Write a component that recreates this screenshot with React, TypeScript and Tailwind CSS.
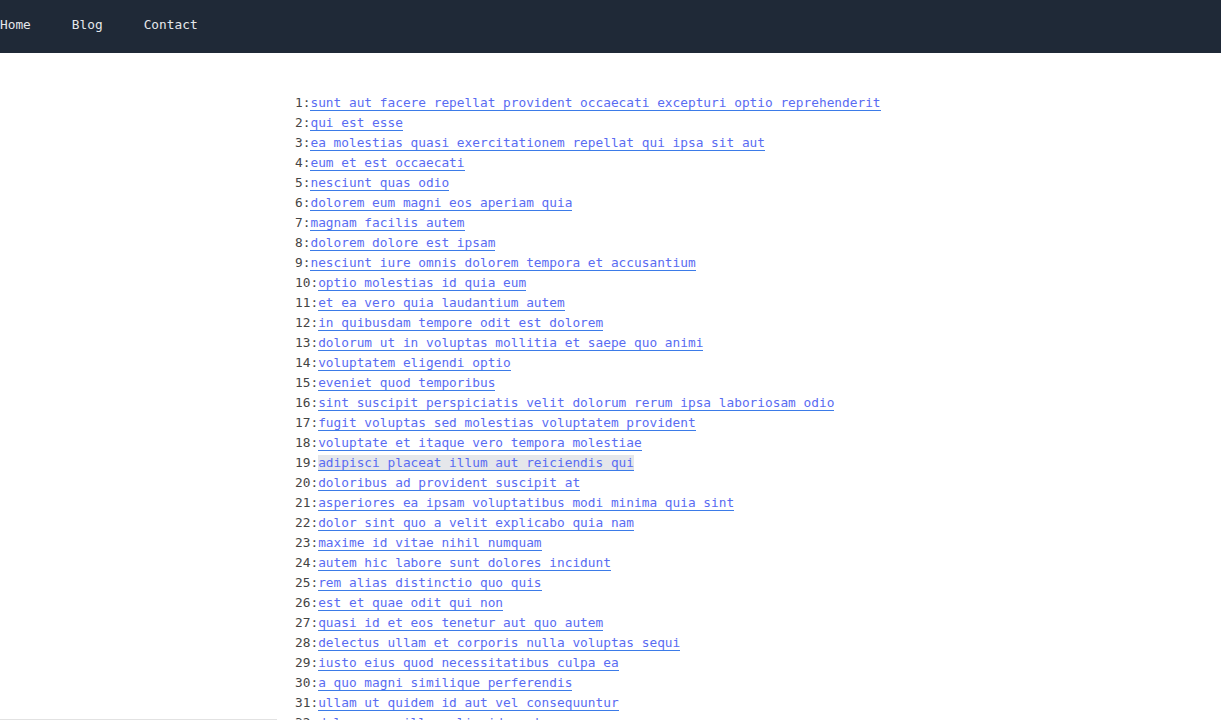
const posts: string[] = [
  'sunt aut facere repellat provident occaecati excepturi optio reprehenderit',
  'qui est esse',
  'ea molestias quasi exercitationem repellat qui ipsa sit aut',
  'eum et est occaecati',
  'nesciunt quas odio',
  'dolorem eum magni eos aperiam quia',
  'magnam facilis autem',
  'dolorem dolore est ipsam',
  'nesciunt iure omnis dolorem tempora et accusantium',
  'optio molestias id quia eum',
  'et ea vero quia laudantium autem',
  'in quibusdam tempore odit est dolorem',
  'dolorum ut in voluptas mollitia et saepe quo animi',
  'voluptatem eligendi optio',
  'eveniet quod temporibus',
  'sint suscipit perspiciatis velit dolorum rerum ipsa laboriosam odio',
  'fugit voluptas sed molestias voluptatem provident',
  'voluptate et itaque vero tempora molestiae',
  'adipisci placeat illum aut reiciendis qui',
  'doloribus ad provident suscipit at',
  'asperiores ea ipsam voluptatibus modi minima quia sint',
  'dolor sint quo a velit explicabo quia nam',
  'maxime id vitae nihil numquam',
  'autem hic labore sunt dolores incidunt',
  'rem alias distinctio quo quis',
  'est et quae odit qui non',
  'quasi id et eos tenetur aut quo autem',
  'delectus ullam et corporis nulla voluptas sequi',
  'iusto eius quod necessitatibus culpa ea',
  'a quo magni similique perferendis',
  'ullam ut quidem id aut vel consequuntur',
  'doloremque illum aliquid sunt',
  'qui explicabo molestiae dolorem',
  'magnam ut rerum iure',
  'id nihil consequatur molestias animi provident',
  'fuga nam accusamus voluptas reiciendis itaque',
  'provident vel ut sit ratione est',
  'explicabo et eos deleniti nostrum ab id repellendus',
];

const navLinks = ['Home', 'Blog', 'Contact'];

export default function App() {
  return (
    <div className="min-h-screen bg-white font-['DejaVu_Sans_Mono',monospace] text-[12.8px]">
      <header className="h-[53px] bg-[#1f2937] flex items-center gap-[41px] pb-1">
        {navLinks.map((link) => (
          <a key={link} href="#" className="text-[#e5e7eb]">
            {link}
          </a>
        ))}
      </header>

      <main className="w-[631px] mx-auto pt-10">
        <ul>
          {posts.map((title, i) => (
            <li key={i} className="leading-5 text-[#444]">
              {i + 1}:
              <a
                href="#"
                className={
                  'text-[#5a6cf2] border-b border-[#3b7be8]' +
                  (i === 18 ? ' bg-[#e5e7eb]' : '')
                }
              >
                {title}
              </a>
            </li>
          ))}
        </ul>
      </main>

      <div className="fixed bottom-0 left-0 w-[277px] h-px bg-[#e2e2e2]" />
    </div>
  );
}
